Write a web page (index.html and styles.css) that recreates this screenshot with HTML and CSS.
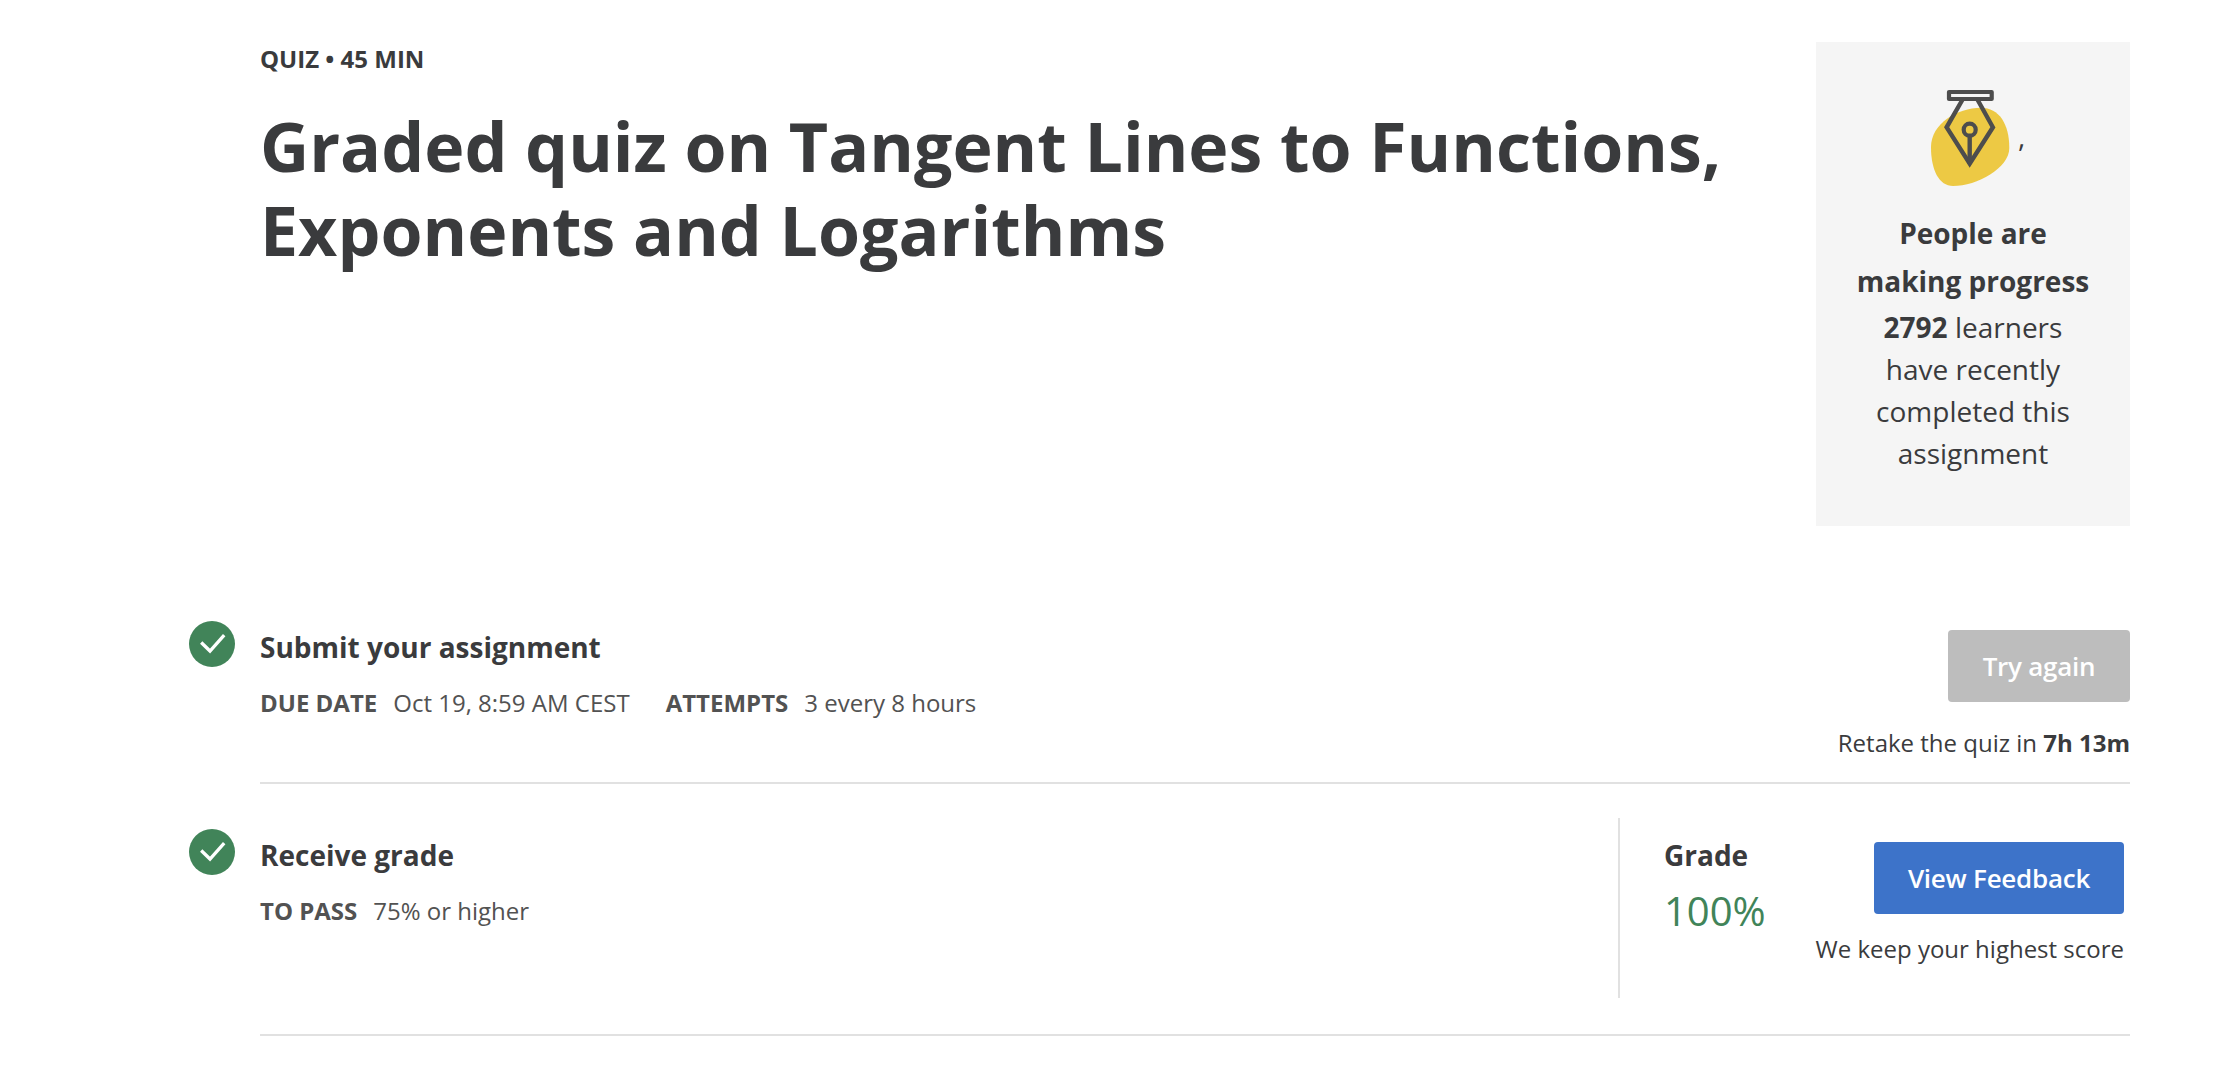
FILE: index.html
```html
<!DOCTYPE html>
<html lang="en">
<head>
<meta charset="utf-8">
<title>Graded quiz</title>
<link rel="stylesheet" href="styles.css">
</head>
<body>
<main class="page">
  <header class="intro">
    <div>
      <p class="kind">QUIZ • 45 MIN</p>
      <h1 class="title">Graded quiz on Tangent Lines to Functions,<br>Exponents and Logarithms</h1>
    </div>
    <aside class="card">
      <div class="badge">
        <svg class="pen" viewBox="0 0 88 102" width="88" height="102" fill="none">
          <path d="M55 21.800C73 21.800 83.300 38 83.300 62C83.300 82 51 100 27 100C13 100 5 84 5 61C5 38 31 21.800 55 21.800Z" fill="#edc944"/>
          <path d="M36.300 14L20.600 41.300L43.700 77.600L66.900 41.300L51.700 14" stroke="#4d4d4d" stroke-width="4.400"/>
          <path d="M43.700 50V78" stroke="#4d4d4d" stroke-width="4.400"/>
          <circle cx="43.700" cy="43.700" r="6" stroke="#4d4d4d" stroke-width="4.200"/>
          <rect x="23" y="6" width="42.700" height="7" stroke="#4d4d4d" stroke-width="4.200" stroke-linejoin="round"/>
        </svg>
        <span class="comma">,</span>
      </div>
      <h2 class="card-title">People are making progress</h2>
      <p class="card-text"><b>2792</b> learners have recently completed this assignment</p>
    </aside>
  </header>

  <section class="row submit">
    <svg class="check" viewBox="0 0 46 46" width="46" height="46"><circle cx="23" cy="23" r="23" fill="#418459"/><path d="M12.200 21.500L21 30L35.200 14.200" fill="none" stroke="#fff" stroke-width="3.300"/></svg>
    <div class="body">
      <div class="info">
        <h3 class="heading">Submit your assignment</h3>
        <p class="meta"><b class="label">DUE DATE</b><span class="first">Oct 19, 8:59 AM CEST</span><b class="label">ATTEMPTS</b><span>3 every 8 hours</span></p>
      </div>
      <div class="action">
        <button class="btn muted" disabled>Try again</button>
        <p class="note">Retake the quiz in <b>7h 13m</b></p>
      </div>
    </div>
  </section>

  <section class="row receive">
    <svg class="check" viewBox="0 0 46 46" width="46" height="46"><circle cx="23" cy="23" r="23" fill="#418459"/><path d="M12.200 21.500L21 30L35.200 14.200" fill="none" stroke="#fff" stroke-width="3.300"/></svg>
    <div class="body">
      <div class="info">
        <h3 class="heading">Receive grade</h3>
        <p class="meta"><b class="label">TO PASS</b><span>75% or higher</span></p>
      </div>
      <div class="result">
        <div>
          <h3 class="heading">Grade</h3>
          <p class="score">100%</p>
        </div>
        <div class="action">
          <button class="btn">View Feedback</button>
          <p class="note">We keep your highest score</p>
        </div>
      </div>
    </div>
  </section>
</main>
</body>
</html>
```
FILE: styles.css
```css
* { box-sizing: border-box; }
body {
  margin: 0;
  background: #fff;
  color: #3a3b3d;
  font-family: "Open Sans", "Noto Sans", sans-serif;
  font-size: 24px;
  line-height: 36px;
}
h1, h2, h3, p { margin: 0; }
.page { width: 2130px; padding: 42px 0 0 189px; }
.intro {
  display: flex;
  justify-content: space-between;
  height: 484px;
  padding-left: 71px;
}
.kind { font-weight: 700; line-height: 34px; }
.title { margin-top: 28px; font-size: 68px; line-height: 84px; font-weight: 700; white-space: nowrap; }
.card { width: 314px; background: #f5f5f5; text-align: center; padding: 44px 40px 0; font-size: 28px; }
.badge { display: flex; padding-left: 70px; height: 123px; }
.comma { margin: 32px 0 0 4px; line-height: 36px; }
.card-title { margin: 0 -10px; font-size: 28px; line-height: 48px; font-weight: 700; }
.card-text { line-height: 42px; margin: 1px 0 0; }
.row { display: flex; align-items: flex-start; gap: 25px; }
.submit { margin-top: 95px; }
.receive { margin-top: 45px; }
.check { flex: none; }
.body { display: flex; justify-content: space-between; flex: 1; border-bottom: 2px solid #e1e1e1; }
.submit .body { height: 163px; }
.receive .body { height: 207px; }
.heading { margin-top: 8px; font-size: 28px; line-height: 36px; font-weight: 700; }
.meta { display: flex; margin-top: 20px; color: #525252; white-space: nowrap; }
.label { margin-right: 16px; }
.first { margin-right: 36px; }
.action { display: flex; flex-direction: column; align-items: flex-end; white-space: nowrap; }
.submit .action { padding-top: 9px; }
.btn {
  height: 72px;
  width: 182px;
  padding: 0;
  border: 0;
  border-radius: 4px;
  background: #3d73c9;
  color: #fff;
  font: 600 26px/72px "Open Sans", "Noto Sans", sans-serif;
  letter-spacing: -0.25px;
}
.muted { background: #bdbdbd; }
.submit .note { margin-top: 23px; }
.result {
  display: flex;
  justify-content: space-between;
  width: 512px;
  height: 180px;
  margin-top: -11px;
  padding: 11px 6px 0 44px;
  border-left: 2px solid #e1e1e1;
}
.receive .action { padding-top: 13px; }
.receive .btn { width: 250px; }
.receive .note { margin-top: 17px; }
.score { margin-top: 14px; color: #418459; font-size: 40px; line-height: 48px; }
```
